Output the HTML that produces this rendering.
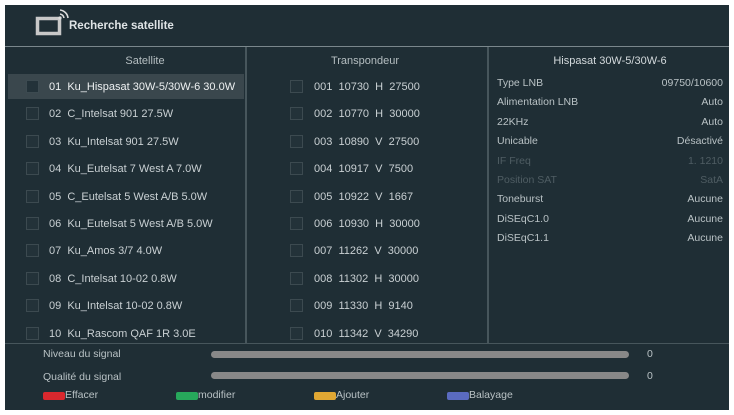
<!DOCTYPE html>
<html><head><meta charset="utf-8"><style>
*{margin:0;padding:0;box-sizing:border-box}
body{width:734px;height:415px;background:#fff;font-family:"Liberation Sans",sans-serif;overflow:hidden;position:relative}
#p{position:absolute;left:5px;top:5px;width:724px;height:405px;background:#1f2e35}
.a{position:absolute;white-space:nowrap}
.hl{position:absolute;background:#dde3e6;height:1px}
.vl{position:absolute;background:#47565c;width:2px}
.cb{position:absolute;width:13px;height:13px;border:1px solid #3c4a50;background:#233239}
.t{color:#c9d0d3;font-size:11px}
.r{color:#b9c2c5;font-size:10.5px}
.bar{position:absolute;height:7px;border-radius:4px;background:#888}
</style></head><body>
<div id="p"></div>
<svg class="a" style="left:34px;top:8px" width="36" height="30"><rect x="3.5" y="10.5" width="22" height="15" fill="none" stroke="#c8c8c8" stroke-width="3.5"/><path d="M26 6a5 5 0 0 1 4 4M26 2a9 9 0 0 1 8 8" stroke="#ddd" stroke-width="1.6" fill="none"/><circle cx="26" cy="10" r="1.6" fill="#ddd"/></svg>
<div class="a" style="left:69px;top:20px;color:#dfe4e6;font-size:11.5px;font-weight:bold">Recherche satellite</div>
<div class="hl" style="left:5px;top:46px;width:724px;background:#7a878c"></div>
<div class="vl" style="left:245px;top:47px;height:296px"></div>
<div class="vl" style="left:487px;top:47px;height:296px"></div>
<div class="hl" style="left:5px;top:343px;width:724px;background:#47565c"></div>
<div class="a t" style="left:100px;top:55px;width:90px;text-align:center;color:#b5bec1">Satellite</div>
<div class="a t" style="left:320px;top:55px;width:90px;text-align:center;color:#b5bec1">Transpondeur</div>
<div class="a t" style="left:520px;top:55px;width:180px;text-align:center;color:#d3d9dc">Hispasat 30W-5/30W-6</div>
<div class="a" style="left:8px;top:74px;width:236px;height:25px;background:#3a474d"></div>
<div id="rows"></div>
<script>
var s=["01&nbsp;&nbsp;Ku_Hispasat 30W-5/30W-6 30.0W","02&nbsp;&nbsp;C_Intelsat 901 27.5W","03&nbsp;&nbsp;Ku_Intelsat 901 27.5W","04&nbsp;&nbsp;Ku_Eutelsat 7 West A 7.0W","05&nbsp;&nbsp;C_Eutelsat 5 West A/B 5.0W","06&nbsp;&nbsp;Ku_Eutelsat 5 West A/B 5.0W","07&nbsp;&nbsp;Ku_Amos 3/7 4.0W","08&nbsp;&nbsp;C_Intelsat 10-02 0.8W","09&nbsp;&nbsp;Ku_Intelsat 10-02 0.8W","10&nbsp;&nbsp;Ku_Rascom QAF 1R 3.0E"];
var t=["001&nbsp;&nbsp;10730&nbsp;&nbsp;H&nbsp;&nbsp;27500","002&nbsp;&nbsp;10770&nbsp;&nbsp;H&nbsp;&nbsp;30000","003&nbsp;&nbsp;10890&nbsp;&nbsp;V&nbsp;&nbsp;27500","004&nbsp;&nbsp;10917&nbsp;&nbsp;V&nbsp;&nbsp;7500","005&nbsp;&nbsp;10922&nbsp;&nbsp;V&nbsp;&nbsp;1667","006&nbsp;&nbsp;10930&nbsp;&nbsp;H&nbsp;&nbsp;30000","007&nbsp;&nbsp;11262&nbsp;&nbsp;V&nbsp;&nbsp;30000","008&nbsp;&nbsp;11302&nbsp;&nbsp;H&nbsp;&nbsp;30000","009&nbsp;&nbsp;11330&nbsp;&nbsp;H&nbsp;&nbsp;9140","010&nbsp;&nbsp;11342&nbsp;&nbsp;V&nbsp;&nbsp;34290"];
var h="";
for(var i=0;i<10;i++){var y=80+i*27.4;
h+='<div class="cb" style="left:26px;top:'+y+'px"></div><div class="a t" style="left:49px;top:'+(y+1)+'px;'+(i==0?'color:#eef1f2':'')+'">'+s[i]+'</div>';
h+='<div class="cb" style="left:290px;top:'+y+'px"></div><div class="a t" style="left:314px;top:'+(y+1)+'px">'+t[i]+'</div>';}
var L=[["Type LNB","09750/10600",1],["Alimentation LNB","Auto",1],["22KHz","Auto",1],["Unicable","Désactivé",1],["IF Freq","1. 1210",0],["Position SAT","SatA",0],["Toneburst","Aucune",1],["DiSEqC1.0","Aucune",1],["DiSEqC1.1","Aucune",1]];
for(var j=0;j<9;j++){var y=77+j*19.4;var c=L[j][2]?"#b9c2c5":"#4f5d63";
h+='<div class="a r" style="left:497px;top:'+y+'px;color:'+c+'">'+L[j][0]+'</div><div class="a r" style="right:11px;top:'+y+'px;color:'+c+'">'+L[j][1]+'</div>';}
document.getElementById("rows").innerHTML=h;
</script>
<div class="a r" style="left:43px;top:348px">Niveau du signal</div>
<div class="bar" style="left:211px;top:351px;width:418px"></div>
<div class="a r" style="left:647px;top:348px">0</div>
<div class="a r" style="left:43px;top:371px">Qualité du signal</div>
<div class="bar" style="left:211px;top:372px;width:418px"></div>
<div class="a r" style="left:647px;top:370px">0</div>
<div class="a" style="left:43px;top:392px;width:22px;height:8px;background:#d9282e;border-radius:2px"></div>
<div class="a r" style="left:65px;top:389px">Effacer</div>
<div class="a" style="left:176px;top:392px;width:22px;height:8px;background:#27a85b;border-radius:2px"></div>
<div class="a r" style="left:198px;top:389px">modifier</div>
<div class="a" style="left:314px;top:392px;width:22px;height:8px;background:#e0a733;border-radius:2px"></div>
<div class="a r" style="left:336px;top:389px">Ajouter</div>
<div class="a" style="left:447px;top:392px;width:22px;height:8px;background:#5a6bc0;border-radius:2px"></div>
<div class="a r" style="left:469px;top:389px">Balayage</div>
</body></html>
